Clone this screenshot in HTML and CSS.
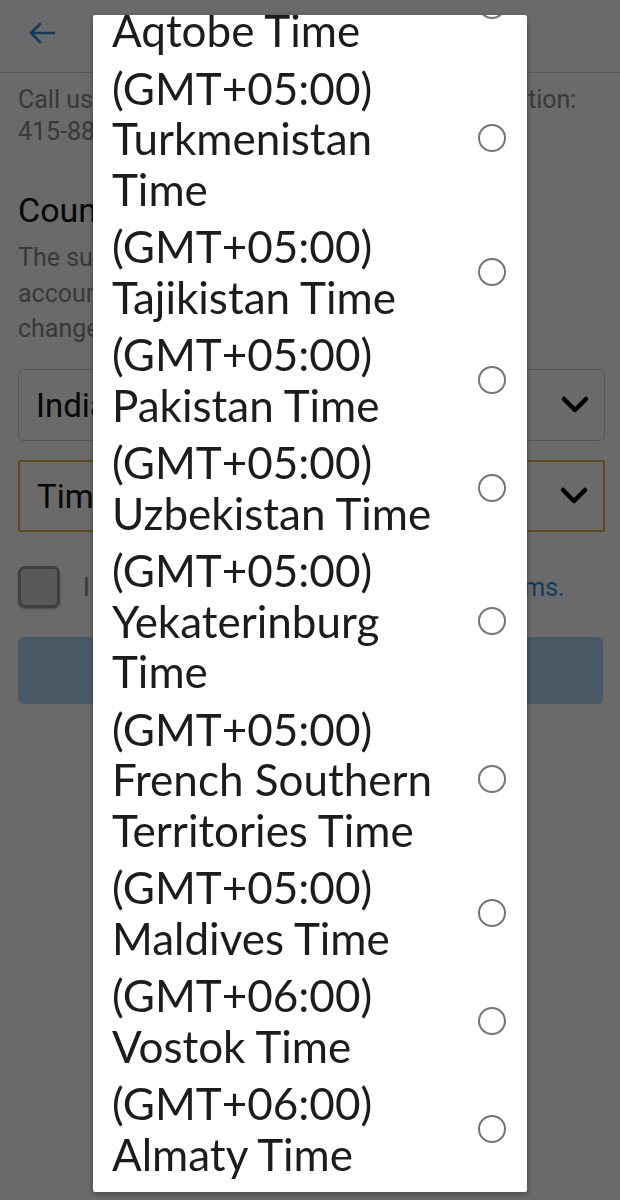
FILE: index.html
```html
<!DOCTYPE html>
<html>
<head>
<meta charset="utf-8">
<link rel="stylesheet" href="styles.css">
</head>
<body>
<div class="page">
  <header class="topbar">
    <svg class="back" width="28" height="24" viewBox="0 0 28 24"><path d="M26 12H3M12 3L3 12l9 9" fill="none" stroke="#2f8fd8" stroke-width="2.6" stroke-linecap="round" stroke-linejoin="round"/></svg>
  </header>
  <main class="content">
    <p class="call">Call us if you need any help with your subscription:<br>415-888-0000</p>
    <h2 class="title">Country and Time Zone</h2>
    <p class="desc">The subscription country and<br>account time zone cannot be<br>changed later.</p>
    <div class="select"><span>India</span><svg class="chev" width="30" height="20" viewBox="0 0 30 20"><path d="M4 4l11 11L26 4" fill="none" stroke="#000" stroke-width="4.5" stroke-linecap="round" stroke-linejoin="round"/></svg></div>
    <div class="select focus"><span>Time Zone</span><svg class="chev" width="30" height="20" viewBox="0 0 30 20"><path d="M4 4l11 11L26 4" fill="none" stroke="#000" stroke-width="4.5" stroke-linecap="round" stroke-linejoin="round"/></svg></div>
    <div class="agree"><span class="box"></span><span class="agree-text">I agree to Privacy Policy and <a>Service Terms.</a></span></div>
    <div class="btn"></div>
  </main>
</div>
<div class="overlay">
  <div class="dialog">
    <ul class="list">
      <li class="item"><span class="label">(GMT+05:00)<br>Aqtobe Time</span><span class="radio"></span></li>
      <li class="item"><span class="label">(GMT+05:00)<br>Turkmenistan<br>Time</span><span class="radio"></span></li>
      <li class="item"><span class="label">(GMT+05:00)<br>Tajikistan Time</span><span class="radio"></span></li>
      <li class="item"><span class="label">(GMT+05:00)<br>Pakistan Time</span><span class="radio"></span></li>
      <li class="item"><span class="label">(GMT+05:00)<br>Uzbekistan Time</span><span class="radio"></span></li>
      <li class="item"><span class="label">(GMT+05:00)<br>Yekaterinburg<br>Time</span><span class="radio"></span></li>
      <li class="item"><span class="label">(GMT+05:00)<br>French Southern<br>Territories Time</span><span class="radio"></span></li>
      <li class="item"><span class="label">(GMT+05:00)<br>Maldives Time</span><span class="radio"></span></li>
      <li class="item"><span class="label">(GMT+06:00)<br>Vostok Time</span><span class="radio"></span></li>
      <li class="item"><span class="label">(GMT+06:00)<br>Almaty Time</span><span class="radio"></span></li>
      <li class="item"><span class="label">(GMT+06:00)<br>Bhutan Time</span><span class="radio"></span></li>
    </ul>
  </div>
</div>
</body>
</html>
```
FILE: styles.css
```css
html, body {
  margin: 0;
  padding: 0;
  width: 620px;
  height: 1200px;
  overflow: hidden;
  background: #fff;
  font-family: Roboto, "Liberation Sans", sans-serif;
}
.page {
  width: 620px;
  height: 1200px;
}
.topbar {
  height: 73px;
  border-bottom: 1px solid #d8d8d8;
  box-sizing: border-box;
  display: flex;
  align-items: flex-start;
  padding: 21px 0 0 28px;
}
.back { display: block; }
.content {
  padding: 11px 15px 0 18px;
}
.call {
  margin: 0;
  font-size: 25px;
  line-height: 32px;
  color: #8a8a8a;
  white-space: nowrap;
}
.title {
  margin: 42px 0 0;
  font-size: 34px;
  font-weight: 400;
  line-height: 40px;
  color: #111;
}
.desc {
  margin: 10px 0 0;
  font-size: 25px;
  line-height: 35.5px;
  color: #8a8a8a;
}
.select {
  margin-top: 22.5px;
  height: 72px;
  box-sizing: border-box;
  border: 1.5px solid #cfcfcf;
  border-radius: 6px;
  display: flex;
  align-items: center;
  justify-content: space-between;
  padding: 0 14px 0 17px;
  font-size: 33px;
  color: #111;
}
.select.focus {
  margin-top: 19px;
  border: 2px solid #e0b040;
  border-radius: 3px;
}
.agree {
  margin-top: 34px;
  display: flex;
  align-items: center;
  gap: 23px;
  font-size: 25px;
  color: #8a8a8a;
  white-space: nowrap;
}
.box {
  flex: none;
  width: 42px;
  height: 42px;
  box-sizing: border-box;
  border: 3px solid #9a9a9a;
  border-radius: 7px;
  background: #d6d6d6;
  box-shadow: 0 1px 2px rgba(0,0,0,0.3);
}
.agree-text a { color: #2f8fd8; }
.btn {
  margin-top: 29px;
  height: 67px;
  border-radius: 6px;
  background: #aed6f4;
  margin-right: 2px;
}
.overlay {
  position: fixed;
  inset: 0;
  background: rgba(0,0,0,0.585);
}
.dialog {
  position: absolute;
  left: 93px;
  top: 15px;
  width: 434px;
  height: 1177px;
  background: #fff;
  border-radius: 2px;
  overflow: hidden;
  box-shadow: 0 2px 6px rgba(0,0,0,0.35);
}
.list {
  list-style: none;
  margin: -64px 0 0;
  padding: 0;
}
.item {
  display: flex;
  align-items: center;
  justify-content: space-between;
  padding: 3.5px 21px 3.5px 19px;
}
.label {
  font-family: Lato, "Noto Sans", sans-serif;
  font-size: 44px;
  line-height: 50.5px;
  color: #1c1c1c;
}
.radio {
  flex: none;
  width: 28px;
  height: 28px;
  box-sizing: border-box;
  border: 2.6px solid #757575;
  border-radius: 50%;
}
```
